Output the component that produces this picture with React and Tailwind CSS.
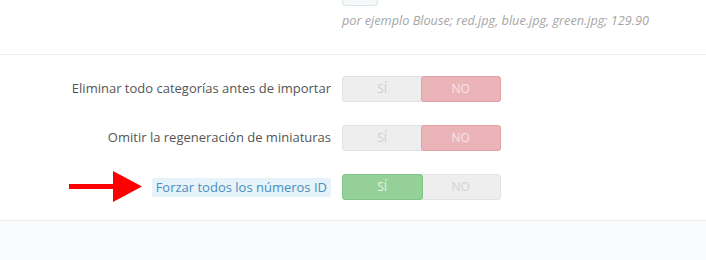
import React from "react";

const rows = [
  { label: "Eliminar todo categorías antes de importar", value: false },
  { label: "Omitir la regeneración de miniaturas", value: false },
  { label: "Forzar todos los números ID", value: true, highlight: true },
];

const Toggle = ({ value }) => (
  <div className="flex w-[159px] h-[26px] rounded-[3px] bg-[#eeeeee] border border-[#e2e2e2] text-[12px] uppercase">
    <div
      className={
        value
          ? "flex-1 flex items-center justify-center rounded-[3px] bg-[#95d098] border border-[#80c585] -m-px text-[#e8f6e9]"
          : "flex-1 flex items-center justify-center text-[#cfcfcf]"
      }
    >
      SÍ
    </div>
    <div
      className={
        !value
          ? "flex-1 flex items-center justify-center rounded-[3px] bg-[#ebb4b8] border border-[#e2a0a5] -m-px text-[#f8e4e5]"
          : "flex-1 flex items-center justify-center text-[#d2d2d2]"
      }
    >
      NO
    </div>
  </div>
);

const Arrow = () => (
  <svg width="74" height="32" viewBox="0 0 74 32" className="mr-[9px] -my-[3px]">
    <rect x="0" y="13" width="46" height="5" fill="#ff0000" />
    <polygon points="44,0 73,15.5 44,31" fill="#ff0000" />
  </svg>
);

export default function App() {
  return (
    <div className="w-[706px] h-[260px] bg-white font-['Open_Sans',sans-serif] overflow-hidden">
      {/* Top section */}
      <div className="h-[56px] border-b border-[#eeeeee] pl-[342px]">
        <div className="w-[36px] h-[7px] -mt-px border border-[#dfe3e6] rounded-b-[3px] bg-[#f5f8f9]" />
        <p className="mt-[6px] text-[12.7px] italic text-[#a6a6a6] leading-[16px]">
          por ejemplo Blouse; red.jpg, blue.jpg, green.jpg; 129.90
        </p>
      </div>

      {/* Options */}
      <div className="pt-[21px] pb-[20px] flex flex-col gap-[23px] border-b border-[#eeeeee]">
        {rows.map((row) => (
          <div key={row.label} className="flex items-center h-[26px]">
            <div className="w-[342px] pr-[11px] flex items-center justify-end">
              {row.highlight && <Arrow />}
              {row.highlight ? (
                <span className="text-[13px] text-[#4b8fba] bg-[#e6f3fb] px-[4px] leading-[19px] rounded-[2px]">
                  {row.label}
                </span>
              ) : (
                <span className="text-[13px] text-[#555555]">{row.label}</span>
              )}
            </div>
            <Toggle value={row.value} />
          </div>
        ))}
      </div>

      {/* Footer */}
      <div className="h-[40px] bg-[#fafbfd]" />
    </div>
  );
}
